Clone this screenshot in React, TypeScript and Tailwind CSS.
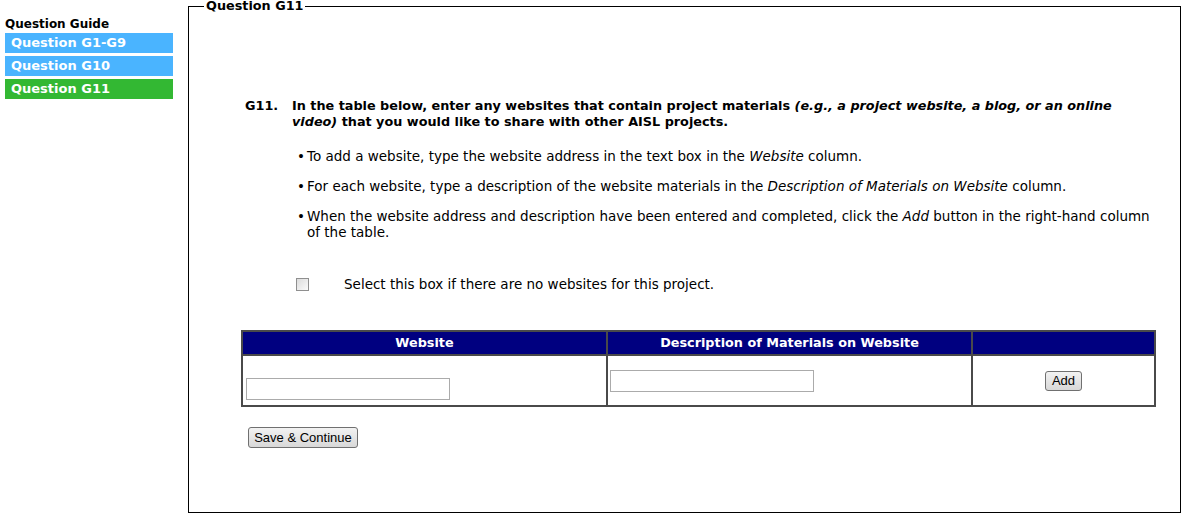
const guide = [
  { label: "Question G1-G9", active: false },
  { label: "Question G10", active: false },
  { label: "Question G11", active: true },
]

const verdana = { fontFamily: '"DejaVu Sans", Verdana, sans-serif' }

export default function App() {
  return (
    <div className="flex h-[516px] w-[1184px] bg-white text-black" style={verdana}>
      {/* Sidebar */}
      <div className="w-[188px] shrink-0 pl-[5px] pt-[17px]">
        <div className="text-[12px] font-bold leading-[15px]">Question Guide</div>
        <div className="mt-[1px] flex w-[168px] flex-col gap-[3px]">
          {guide.map((g) => (
            <div
              key={g.label}
              className={`h-[20px] pl-[6px] text-[13px] font-bold leading-[20px] text-white ${
                g.active ? "bg-[#33b833]" : "bg-[#4ab4ff]"
              }`}
            >
              {g.label}
            </div>
          ))}
        </div>
      </div>

      {/* Main panel */}
      <fieldset className="mr-[3px] mb-[3px] flex-1 border border-black">
        <legend className="ml-[15px] px-[2px] text-[12.8px] font-bold leading-[12px]">Question G11</legend>

        <div className="pl-[52px] pr-[24px]">
          <div className="mt-[86px] flex pl-[4px] text-[12.8px] font-bold leading-[16px]">
            <div className="w-[47px] shrink-0">G11.</div>
            <div>
              In the table below, enter any websites that contain project materials{" "}
              <i>(e.g., a project website, a blog, or an online video)</i> that you would like to share with
              other AISL projects.
            </div>
          </div>

          <ul className="mt-[18px] flex flex-col gap-[14px] pl-[56px] text-[13.5px] leading-[16px]">
            <li className="flex">
              <span className="w-[10px] shrink-0">•</span>
              <span>
                To add a website, type the website address in the text box in the <i>Website</i> column.
              </span>
            </li>
            <li className="flex">
              <span className="w-[10px] shrink-0">•</span>
              <span>
                For each website, type a description of the website materials in the{" "}
                <i>Description of Materials on Website</i> column.
              </span>
            </li>
            <li className="flex">
              <span className="w-[10px] shrink-0">•</span>
              <span>
                When the website address and description have been entered and completed, click the <i>Add</i>{" "}
                button in the right-hand column of the table.
              </span>
            </li>
          </ul>

          <div className="mt-[36px] flex items-center pl-[55px] text-[13.5px] leading-[16px]">
            <span className="h-[13px] w-[13px] border border-[#8f8f8f] bg-gradient-to-br from-[#dcdcdc] to-[#fbfbfb]" />
            <span className="ml-[35px]">Select this box if there are no websites for this project.</span>
          </div>

          <div className="mt-[38px] border-2 border-[#4a4a4a]">
            <div className="grid grid-cols-[365px_365px_1fr] bg-[#000080] text-[12.8px] font-bold leading-[22px] text-white">
              <div className="border-r-2 border-[#4a4a4a] text-center">Website</div>
              <div className="border-r-2 border-[#4a4a4a] text-center">Description of Materials on Website</div>
              <div />
            </div>
            <div className="grid h-[51px] grid-cols-[365px_365px_1fr] border-t-2 border-[#4a4a4a]">
              <div className="flex items-end border-r-2 border-[#4a4a4a] pb-[5px] pl-[3px]">
                <div className="h-[22px] w-[204px] border border-[#ababab] bg-white" />
              </div>
              <div className="flex items-center border-r-2 border-[#4a4a4a] pl-[2px]">
                <div className="h-[22px] w-[204px] border border-[#ababab] bg-white" />
              </div>
              <div className="flex items-center justify-center">
                <button
                  className="h-[20px] rounded-[3px] border border-[#707070] bg-gradient-to-b from-[#f2f2f2] to-[#d8d8d8] px-[6px] text-[13px] leading-[18px]"
                  style={{ fontFamily: '"Liberation Sans", Arial, sans-serif' }}
                >
                  Add
                </button>
              </div>
            </div>
          </div>

          <button
            className="mt-[20px] ml-[7px] h-[21px] w-[110px] rounded-[3px] border border-[#707070] bg-gradient-to-b from-[#f2f2f2] to-[#d8d8d8] text-[13px] leading-[19px]"
            style={{ fontFamily: '"Liberation Sans", Arial, sans-serif' }}
          >
            Save &amp; Continue
          </button>
        </div>
      </fieldset>
    </div>
  )
}
